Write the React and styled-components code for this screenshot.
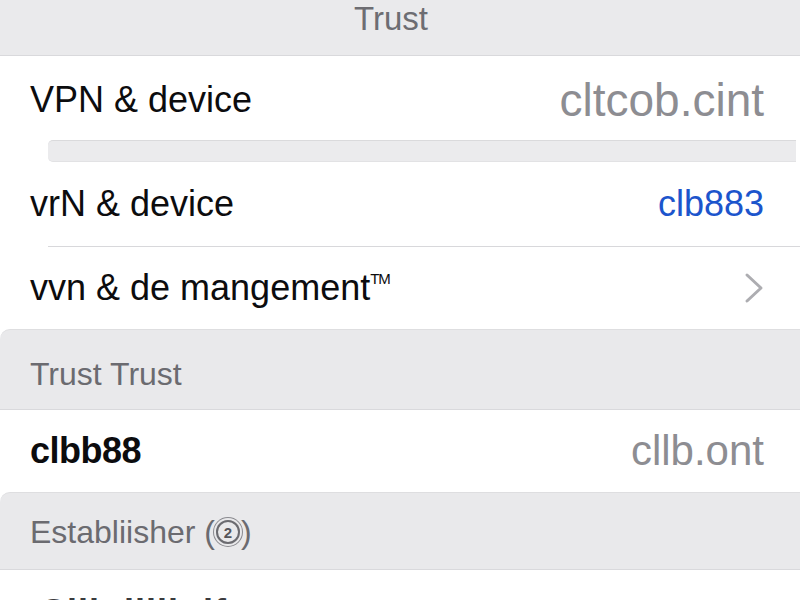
import React from "react";
import styled, { createGlobalStyle } from "styled-components";

const GlobalStyle = createGlobalStyle`
  html, body {
    margin: 0;
    padding: 0;
    background: #ffffff;
  }
  body {
    font-family: "Liberation Sans", Arial, sans-serif;
  }
`;

const Screen = styled.div`
  width: 800px;
  height: 600px;
  overflow: hidden;
  display: flex;
  flex-direction: column;
  background: #ffffff;
`;

const TopBar = styled.div`
  height: 54px;
  flex-shrink: 0;
  display: flex;
  justify-content: center;
  align-items: flex-start;
  padding-top: 1px;
  background: #eaeaec;
  border-bottom: 1px solid #d9d9dc;
  box-sizing: content-box;
`;

const TopTitle = styled.span`
  font-size: 33px;
  line-height: 36px;
  color: #6d6d72;
  margin-left: -18px;
`;

const Row = styled.div`
  height: ${({ h }) => h}px;
  flex-shrink: 0;
  display: flex;
  align-items: center;
  justify-content: space-between;
  padding: ${({ offset = 0 }) => offset}px 36px 0 30px;
  background: #ffffff;
  box-sizing: border-box;
`;

const Label = styled.span`
  font-size: 36px;
  color: #0c0c0e;
  font-weight: ${({ bold }) => (bold ? 700 : 400)};
  letter-spacing: ${({ bold }) => (bold ? "-0.5px" : "0")};
  white-space: nowrap;
`;

const Tm = styled.sup`
  font-size: 15px;
  vertical-align: 16px;
  letter-spacing: -1px;
`;

const Value = styled.span`
  font-size: ${({ size }) => size}px;
  color: ${({ blue }) => (blue ? "#1c55cc" : "#8d8d92")};
  white-space: nowrap;
`;

const InsetStrip = styled.div`
  height: 20px;
  flex-shrink: 0;
  margin-left: 48px;
  margin-right: 4px;
  background: #ebebed;
  border-top: 1px solid #dadadc;
  border-bottom: 1px solid #e2e2e4;
  border-radius: 5px 0 0 5px;
`;

const Divider = styled.div`
  height: 1px;
  flex-shrink: 0;
  margin-left: 48px;
  background: #d8d8db;
`;

const SectionHeader = styled.div`
  height: ${({ h }) => h}px;
  flex-shrink: 0;
  display: flex;
  align-items: center;
  padding: ${({ offset }) => offset}px 0 0 30px;
  background: #e9e9eb;
  border-top: 1px solid #dedee0;
  border-bottom: 1px solid #d9d9dc;
  border-top-left-radius: 10px;
  box-sizing: border-box;
`;

const SectionTitle = styled.span`
  font-size: 32px;
  color: #6b6b70;
  display: inline-flex;
  align-items: center;
  white-space: nowrap;
`;

const Badge = styled.span`
  display: inline-flex;
  align-items: center;
  justify-content: center;
  width: 20px;
  height: 20px;
  margin: 0 1px;
  border: 2px solid #6b6b70;
  border-radius: 50%;
  font-size: 15px;
  font-weight: 700;
  color: #55555a;
  box-shadow: 0 0 0 2px #e9e9eb, 0 0 0 3px #8a8a8f;
`;

const CutRow = styled.div`
  flex: 1;
  padding: 22px 0 0 40px;
  background: #ffffff;
`;

const CutText = styled.span`
  font-size: 36px;
  font-weight: 700;
  color: #3a3a3d;
  letter-spacing: 1px;
  white-space: nowrap;
`;

const Chevron = () => (
  <svg width="20" height="32" viewBox="0 0 20 32" fill="none">
    <polyline
      points="3,3 17,16 3,29"
      stroke="#adadb1"
      strokeWidth="3"
      strokeLinecap="round"
      strokeLinejoin="round"
    />
  </svg>
);

export default function App() {
  return (
    <>
      <GlobalStyle />
      <Screen>
        <TopBar>
          <TopTitle>Trust</TopTitle>
        </TopBar>

        <Row h={84} offset={3}>
          <Label>VPN &amp; device</Label>
          <Value size={46}>cltcob.cint</Value>
        </Row>

        <InsetStrip />

        <Row h={84}>
          <Label>vrN &amp; device</Label>
          <Value size={36} blue>clb883</Value>
        </Row>

        <Divider />

        <Row h={82}>
          <Label>
            vvn &amp; de mangement<Tm>TM</Tm>
          </Label>
          <Chevron />
        </Row>

        <SectionHeader h={81} offset={10}>
          <SectionTitle>Trust Trust</SectionTitle>
        </SectionHeader>

        <Row h={82}>
          <Label bold>clbb88</Label>
          <Value size={42}>cllb.ont</Value>
        </Row>

        <SectionHeader h={78} offset={2}>
          <SectionTitle>
            Establiisher (<Badge>2</Badge>)
          </SectionTitle>
        </SectionHeader>

        <CutRow>
          <CutText>Cllbdlllbdf</CutText>
        </CutRow>
      </Screen>
    </>
  );
}
